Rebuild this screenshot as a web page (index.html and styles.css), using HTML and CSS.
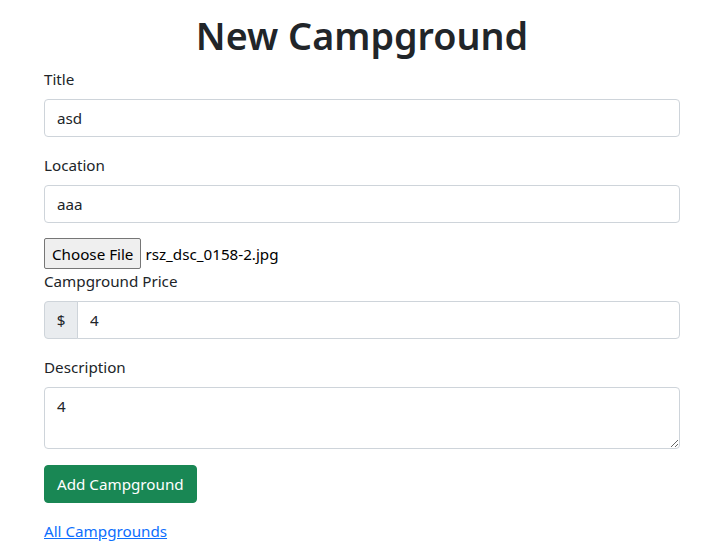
FILE: index.html
```html
<!DOCTYPE html>
<html lang="en">
<head>
<meta charset="utf-8">
<title>New Campground</title>
<link rel="stylesheet" href="styles.css">
</head>
<body>
<main class="page">
  <h1 class="heading">New Campground</h1>
  <form class="form">
    <div class="field">
      <label class="label" for="title">Title</label>
      <input class="control" id="title" type="text" value="asd">
    </div>
    <div class="field">
      <label class="label" for="location">Location</label>
      <input class="control" id="location" type="text" value="aaa">
    </div>
    <div class="file-row">
      <button type="button" class="file-btn">Choose File</button>
      <span class="file-name">rsz_dsc_0158-2.jpg</span>
    </div>
    <div class="field">
      <label class="label" for="price">Campground Price</label>
      <div class="input-group">
        <span class="addon">$</span>
        <input class="control group-control" id="price" type="text" value="4">
      </div>
    </div>
    <div class="field">
      <label class="label" for="description">Description</label>
      <textarea class="control textarea" id="description" rows="2">4</textarea>
    </div>
    <div class="field">
      <button type="button" class="btn-success">Add Campground</button>
    </div>
  </form>
  <a class="back-link" href="#">All Campgrounds</a>
</main>
</body>
</html>
```
FILE: styles.css
```css
* { box-sizing: border-box; }
html, body { margin: 0; padding: 0; background: #fff; }
body {
  font-family: "Noto Sans", "Open Sans", "Liberation Sans", sans-serif;
  font-size: 15.2px;
  line-height: 24px;
  color: #212529;
}
.page {
  padding: 12px 30px 0 44px;
}
.heading {
  margin: 0 0 8px;
  text-align: center;
  font-size: 37.7px;
  line-height: 47px;
  font-weight: 600;
}
.form { margin: 0; }
.field { margin-bottom: 16px; }
.label {
  display: block;
  margin-bottom: 8px;
}
.control {
  display: block;
  width: 100%;
  height: 38px;
  padding: 6px 12px;
  font: inherit;
  line-height: 24px;
  color: #212529;
  background: #fff;
  border: 1px solid #ced4da;
  border-radius: 4px;
  outline: none;
}
.textarea {
  height: 62px;
  resize: vertical;
}
.file-row {
  display: flex;
  align-items: center;
  height: 31px;
  margin-top: -1px;
}
.file-btn {
  font: inherit;
  height: 31px;
  padding: 0 7px;
  color: #000;
  background: #efefef;
  border: 1px solid #767676;
  border-radius: 2px;
  margin-right: 4px;
}
.file-name { color: #000; }
.input-group {
  display: flex;
}
.addon {
  display: flex;
  align-items: center;
  justify-content: center;
  width: 34px;
  height: 38px;
  background: #e9ecef;
  border: 1px solid #ced4da;
  border-radius: 4px 0 0 4px;
  color: #212529;
}
.group-control {
  flex: 1;
  margin-left: -1px;
  border-radius: 0 4px 4px 0;
}
.btn-success {
  font: inherit;
  height: 38px;
  padding: 6px 12px;
  color: #fff;
  background: #198754;
  border: 1px solid #198754;
  border-radius: 4px;
}
.back-link {
  color: #0d6efd;
  text-decoration: underline;
}
```
